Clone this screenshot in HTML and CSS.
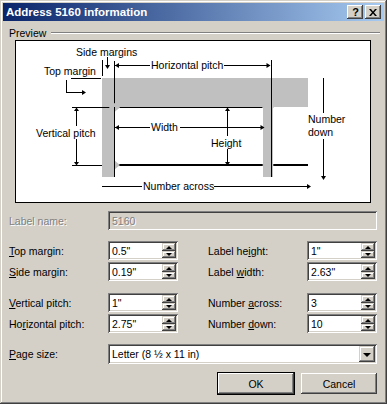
FILE: index.html
```html
<!DOCTYPE html>
<html>
<head>
<meta charset="utf-8">
<link rel="stylesheet" href="styles.css">
</head>
<body>
<div class="window">
  <div class="titlebar">
    <span class="title-text">Address 5160 information</span>
    <span class="tbtn help">?</span>
    <span class="tbtn close"><svg width="8" height="7" viewBox="0 0 8 7"><path d="M0 0h2l2 2.5L6 0h2L5 3.5 8 7H6L4 4.5 2 7H0l3-3.5z" fill="#000"/></svg></span>
  </div>
  <div class="content">
    <div class="group-head"><span>Preview</span><span class="groove"></span></div>
    <div class="diagram">
      <svg width="354" height="161" viewBox="16 41 354 161" shape-rendering="crispEdges">
        <rect x="102" y="78" width="206" height="29" fill="#c0c0c0"/>
        <rect x="102" y="107" width="12" height="70" fill="#c0c0c0"/>
        <rect x="263" y="107" width="10" height="70" fill="#c0c0c0"/>
        <g stroke="#000" stroke-width="1" fill="none">
          <path d="M114.5 61V177"/>
          <path d="M271.5 60V177"/>
          <path d="M72 107.5H263"/>
          <path d="M72 165.5H102"/>
          <path d="M114 65.5H150M224 65.5H270"/>
          <path d="M102.5 60V76"/>
          <path d="M107.5 57V65"/>
          <path d="M71 78.5H101"/>
          <path d="M66.5 80V92.5H83"/>
          <path d="M76.5 109V126M76.5 139V163"/>
          <path d="M114 127.5H150M180 127.5H264"/>
          <path d="M227.5 109V136M227.5 149V163"/>
          <path d="M323.5 78V113M323.5 139V176"/>
          <path d="M102 186.5H142M214 186.5H308"/>
        </g>
        <rect x="114" y="164" width="194" height="2" fill="#000"/>
        <g fill="#c0c0c0" shape-rendering="auto">
          <polygon points="109,107.5 114.5,103 120,107.5 114.5,112"/>
          <polygon points="109,165 114.5,160.5 120,165 114.5,169.5"/>
          <polygon points="262,107.5 268,103 274,107.5 268,112"/>
          <polygon points="262,165 268,160.5 274,165 268,169.5"/>
        </g>
        <g stroke="#000" stroke-width="1" fill="none">
          <path d="M114.5 107V112M114.5 160V170M271.5 103V112M271.5 160V170"/>
        </g>
        <g fill="#000" shape-rendering="auto">
          <polygon points="115,65.5 119,63 119,68"/>
          <polygon points="270.5,65.5 266.5,63 266.5,68"/>
          <polygon points="107.5,69 105,65 110,65"/>
          <polygon points="86,92.5 82,90 82,95"/>
          <polygon points="76.5,107.5 74,111 79,111"/>
          <polygon points="76.5,165.5 74,162 79,162"/>
          <polygon points="115,127.5 119,125 119,130"/>
          <polygon points="264.5,127.5 260.5,125 260.5,130"/>
          <polygon points="227.5,107.5 225,111 230,111"/>
          <polygon points="227.5,165.5 225,162 230,162"/>
          <polygon points="323.5,180 321,176 326,176"/>
          <polygon points="311,186.5 307,184 307,189"/>
        </g>
        <g class="dtext">
          <text x="76" y="56">Side margins</text>
          <text x="44" y="75">Top margin</text>
          <text x="151" y="69">Horizontal pitch</text>
          <text x="36" y="137">Vertical pitch</text>
          <text x="151" y="131">Width</text>
          <text x="211" y="147">Height</text>
          <text x="308" y="123">Number</text>
          <text x="308" y="136">down</text>
          <text x="143" y="190">Number across</text>
        </g>
      </svg>
    </div>

    <div class="row-name">
      <span class="lbl disabled">Label name:</span>
      <span class="field wide disabled-field"><span class="disabled">5160</span></span>
    </div>

    <div class="grid first">
      <span class="lbl"><u>T</u>op margin:</span>
      <span class="field"><span>0.5"</span><span class="spin"><span class="up"><i></i></span><span class="dn"><i></i></span></span></span>
      <span></span>
      <span class="lbl">Label he<u>i</u>ght:</span>
      <span class="field"><span>1"</span><span class="spin"><span class="up"><i></i></span><span class="dn"><i></i></span></span></span>

      <span class="lbl"><u>S</u>ide margin:</span>
      <span class="field"><span>0.19"</span><span class="spin"><span class="up"><i></i></span><span class="dn"><i></i></span></span></span>
      <span></span>
      <span class="lbl">Label <u>w</u>idth:</span>
      <span class="field"><span>2.63"</span><span class="spin"><span class="up"><i></i></span><span class="dn"><i></i></span></span></span>
    </div>

    <div class="grid second">
      <span class="lbl"><u>V</u>ertical pitch:</span>
      <span class="field"><span>1"</span><span class="spin"><span class="up"><i></i></span><span class="dn"><i></i></span></span></span>
      <span></span>
      <span class="lbl">Number <u>a</u>cross:</span>
      <span class="field"><span>3</span><span class="spin"><span class="up"><i></i></span><span class="dn"><i></i></span></span></span>

      <span class="lbl">Ho<u>r</u>izontal pitch:</span>
      <span class="field"><span>2.75"</span><span class="spin"><span class="up"><i></i></span><span class="dn"><i></i></span></span></span>
      <span></span>
      <span class="lbl">Number <u>d</u>own:</span>
      <span class="field"><span>10</span><span class="spin"><span class="up"><i></i></span><span class="dn"><i></i></span></span></span>
    </div>

    <div class="row-page">
      <span class="lbl"><u>P</u>age size:</span>
      <span class="field wide combo"><span>Letter (8 ½ x 11 in)</span><span class="drop"><i></i></span></span>
    </div>

    <div class="buttons">
      <span class="btn default"><span class="inner">OK</span></span>
      <span class="btn">Cancel</span>
    </div>
  </div>
</div>
</body>
</html>
```

FILE: styles.css
```css
* { box-sizing: border-box; }
html, body { margin: 0; padding: 0; }
body {
  background: #d4d0c8;
  font-family: "Liberation Sans", Arial, sans-serif;
  font-size: 10.5px;
  color: #000;
}
.window {
  width: 387px;
  height: 404px;
  background: #d4d0c8;
  padding: 3px;
  box-shadow: inset -1px -1px #404040, inset 1px 1px #d4d0c8, inset -2px -2px #808080, inset 2px 2px #fff;
}
.titlebar {
  height: 18px;
  background: linear-gradient(to right, #0a246a, #a6caf0);
  display: flex;
  align-items: center;
  padding: 0 3px 0 3px;
  color: #fff;
  font-weight: bold;
  font-size: 11.5px;
}
.title-text { flex: 1; white-space: nowrap; }
.tbtn {
  width: 16px;
  height: 14px;
  background: #d4d0c8;
  box-shadow: inset -1px -1px #404040, inset 1px 1px #fff, inset -2px -2px #808080, inset 2px 2px #d4d0c8;
  display: flex;
  align-items: center;
  justify-content: center;
  color: #000;
  font-size: 11px;
  font-weight: bold;
  line-height: 1;
}
.tbtn.help { padding-left: 1px; }
.tbtn.close { margin-left: 2px; }
.tbtn svg { display: block; }

.content { padding: 0 4px 0 6px; }
.group-head {
  display: flex;
  align-items: center;
  height: 14px;
  margin-top: 5px;
}
.groove {
  flex: 1;
  height: 2px;
  border-top: 1px solid #808080;
  border-bottom: 1px solid #fff;
  margin-left: 5px;
}
.diagram {
  margin-left: 6px;
  width: 356px;
  height: 163px;
  border: 1px solid #000;
  background: #fff;
}
.diagram svg { display: block; }
.dtext text {
  font-family: "Liberation Sans", Arial, sans-serif;
  font-size: 10.5px;
  fill: #000;
}

.lbl { white-space: nowrap; }
.lbl u { text-decoration: underline; }
.disabled { color: #808080; text-shadow: 1px 1px 0 #fff; }

.field {
  height: 19px;
  background: #fff;
  box-shadow: inset 1px 1px #808080, inset -1px -1px #fff, inset 2px 2px #404040, inset -2px -2px #d4d0c8;
  display: flex;
  align-items: center;
  padding: 2px 2px 2px 4px;
  white-space: nowrap;
}
.field.wide { width: 269px; }
.field.disabled-field { background: #d4d0c8; }

.row-name {
  display: flex;
  align-items: center;
  margin-top: 8px;
}
.row-name .lbl, .row-page .lbl { width: 99px; }

.grid {
  display: grid;
  grid-template-columns: 99px 70px 30px 99px 70px;
  grid-auto-rows: 19px;
  row-gap: 2px;
  align-items: center;
}
.grid.first { margin-top: 11px; }
.grid.second { margin-top: 12px; }

.spin {
  margin-left: auto;
  width: 14px;
  height: 15px;
  display: flex;
  flex-direction: column;
}
.spin > span {
  background: #d4d0c8;
  box-shadow: inset -1px -1px #404040, inset 1px 1px #d4d0c8, inset -2px -2px #808080, inset 2px 2px #fff;
  display: flex;
  align-items: center;
  justify-content: center;
}
.spin .up { height: 8px; }
.spin .dn { height: 7px; }
.spin .up i {
  width: 0; height: 0;
  border-left: 3px solid transparent;
  border-right: 3px solid transparent;
  border-bottom: 3px solid #000;
}
.spin .dn i {
  width: 0; height: 0;
  border-left: 3px solid transparent;
  border-right: 3px solid transparent;
  border-top: 3px solid #000;
}

.row-page {
  display: flex;
  align-items: center;
  margin-top: 11px;
}
.field.combo { height: 20px; }
.drop {
  margin-left: auto;
  width: 16px;
  height: 16px;
  background: #d4d0c8;
  box-shadow: inset -1px -1px #404040, inset 1px 1px #d4d0c8, inset -2px -2px #808080, inset 2px 2px #fff;
  display: flex;
  align-items: center;
  justify-content: center;
}
.drop i {
  width: 0; height: 0;
  border-left: 4px solid transparent;
  border-right: 4px solid transparent;
  border-top: 4px solid #000;
  margin-top: 1px;
}

.buttons {
  display: flex;
  justify-content: flex-end;
  align-items: center;
  gap: 6px;
  margin-top: 8px;
  margin-right: 3px;
}
.btn {
  width: 76px;
  height: 21px;
  background: #d4d0c8;
  box-shadow: inset -1px -1px #404040, inset 1px 1px #fff, inset -2px -2px #808080, inset 2px 2px #d4d0c8;
  display: flex;
  align-items: center;
  justify-content: center;
}
.btn.default {
  width: 78px;
  height: 23px;
  border: 1px solid #000;
}
.btn.default .inner {
  width: 76px;
  height: 21px;
  display: flex;
  align-items: center;
  justify-content: center;
  box-shadow: inset -1px -1px #404040, inset 1px 1px #fff, inset -2px -2px #808080, inset 2px 2px #d4d0c8;
}
.btn.default { box-shadow: none; }
```
